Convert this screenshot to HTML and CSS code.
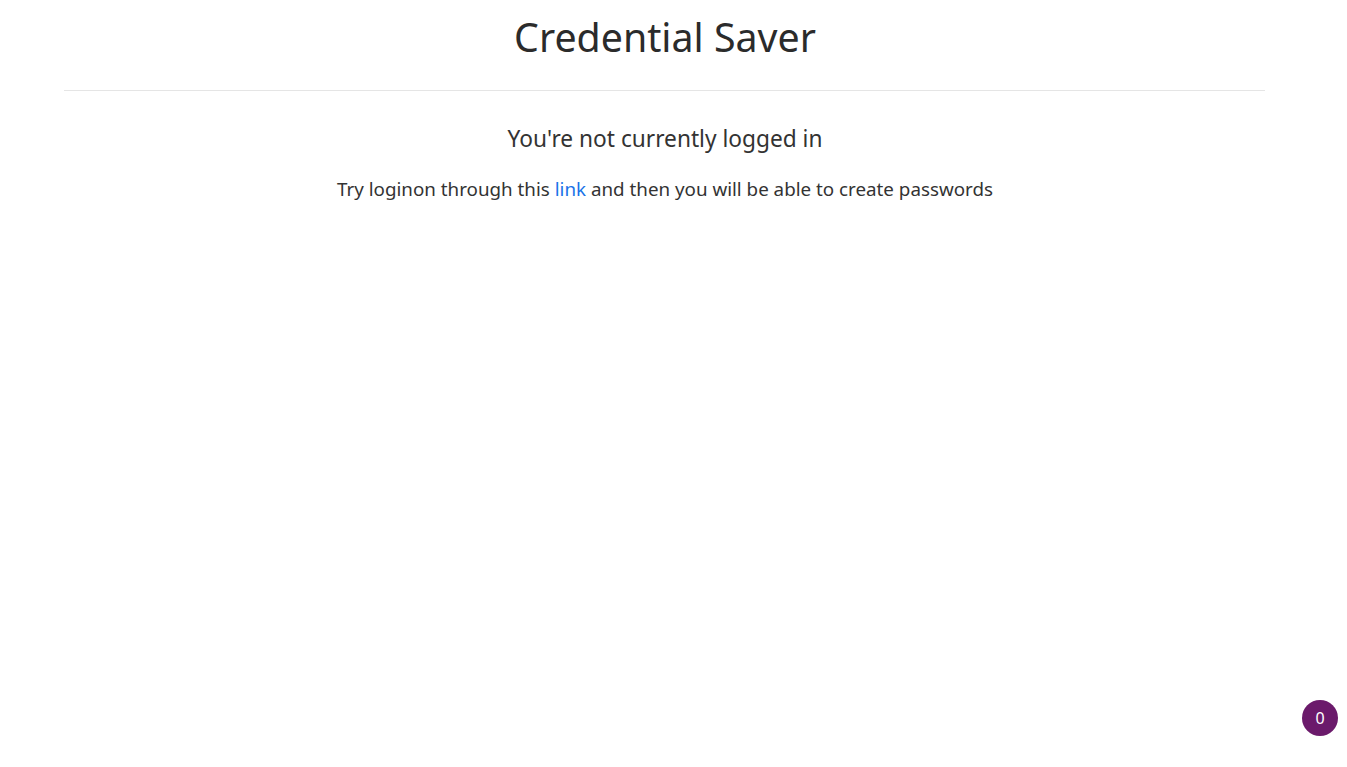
FILE: index.html
```html
<!DOCTYPE html>
<html>
<head>
<meta charset="utf-8">
<link rel="stylesheet" href="styles.css">
</head>
<body>
<div class="page">
  <header class="header">
    <h1 class="title">Credential Saver</h1>
  </header>
  <hr class="rule">
  <main class="content">
    <h4 class="subtitle">You're not currently logged in</h4>
    <p class="text">Try loginon through this <a href="#" class="link">link</a> and then you will be able to create passwords</p>
  </main>
</div>
<div class="badge">0</div>
</body>
</html>
```
FILE: styles.css
```css
html, body {
  margin: 0;
  padding: 0;
  background: #fff;
}
body {
  font-family: "Noto Sans", "Open Sans", sans-serif;
  color: #333;
}
.page {
  width: 1330px;
}
.header {
  display: flex;
  justify-content: center;
  padding-top: 9px;
}
.title {
  margin: 0;
  font-weight: 400;
  font-size: 39.3px;
  line-height: 56px;
  color: #2b2b2b;
}
.rule {
  margin: 25px 65px 0 64px;
  border: 0;
  border-top: 1px solid #e5e5e5;
}
.content {
  display: flex;
  flex-direction: column;
  align-items: center;
  padding-top: 32px;
}
.subtitle {
  margin: 0;
  font-weight: 400;
  font-size: 22.7px;
  line-height: 32px;
  color: #333;
}
.text {
  margin: 20px 0 0;
  font-size: 18.8px;
  line-height: 28px;
  color: #333;
}
.link {
  color: #1a73e8;
  text-decoration: none;
}
.badge {
  position: fixed;
  right: 9px;
  bottom: 31px;
  width: 36px;
  height: 36px;
  border-radius: 50%;
  background: #6b1a6b;
  color: #fff;
  font-size: 16px;
  display: flex;
  align-items: center;
  justify-content: center;
}
```
